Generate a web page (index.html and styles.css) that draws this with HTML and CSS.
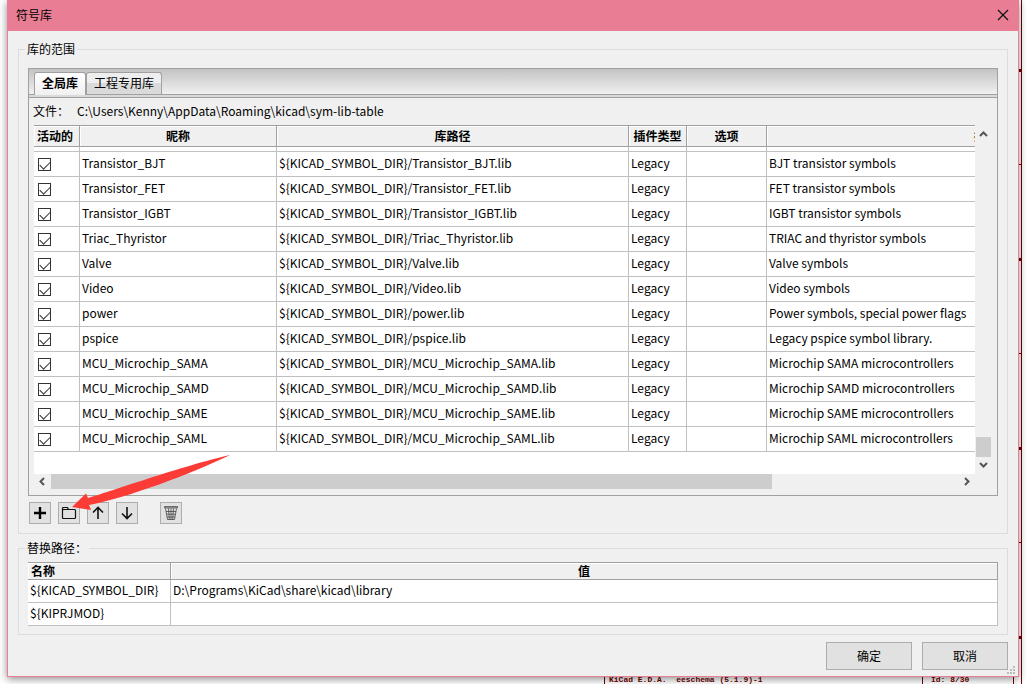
FILE: index.html
```html
<!DOCTYPE html>
<html lang="zh-CN">
<head>
<meta charset="utf-8">
<title>符号库</title>
<link rel="stylesheet" href="styles.css">
</head>
<body>
<div class="sheet" aria-hidden="true">
  <span class="sheet-title">KiCad E.D.A.&nbsp; eeschema (5.1.9)-1</span>
  <span class="sheet-id">Id: 8/30</span>
</div>
<main class="dialog">
  <header class="titlebar">
    <h1 class="title">符号库</h1>
    <button class="close" aria-label="关闭"><svg width="12" height="12" viewBox="0 0 12 12"><path d="M1 1l10 10M11 1L1 11" stroke="#111" stroke-width="1.200" fill="none"/></svg></button>
  </header>
  <div class="content">
    <fieldset class="group scope">
      <legend>库的范围</legend>
      <div class="notebook">
        <div class="tabs" role="tablist">
          <button class="tab selected" role="tab" aria-selected="true">全局库</button>
          <button class="tab" role="tab" aria-selected="false">工程专用库</button>
        </div>
        <div class="page">
          <p class="file"><span class="file-label">文件：</span><span>C:\Users\Kenny\AppData\Roaming\kicad\sym-lib-table</span></p>
          <div class="viewport">
            <div class="rows">
              <table class="grid libs">
                <colgroup><col class="c-active"><col class="c-nick"><col class="c-path"><col class="c-type"><col class="c-opt"><col class="c-desc"></colgroup>
                <thead><tr><th>活动的</th><th>昵称</th><th>库路径</th><th>插件类型</th><th>选项</th><th>描述</th></tr></thead>
                <tbody>
                  <tr class="partial"><td></td><td></td><td></td><td></td><td></td><td></td></tr>
                  <tr><td><input type="checkbox" checked aria-label="Transistor_BJT"></td><td>Transistor_BJT</td><td>${KICAD_SYMBOL_DIR}/Transistor_BJT.lib</td><td>Legacy</td><td></td><td>BJT transistor symbols</td></tr>
                  <tr><td><input type="checkbox" checked aria-label="Transistor_FET"></td><td>Transistor_FET</td><td>${KICAD_SYMBOL_DIR}/Transistor_FET.lib</td><td>Legacy</td><td></td><td>FET transistor symbols</td></tr>
                  <tr><td><input type="checkbox" checked aria-label="Transistor_IGBT"></td><td>Transistor_IGBT</td><td>${KICAD_SYMBOL_DIR}/Transistor_IGBT.lib</td><td>Legacy</td><td></td><td>IGBT transistor symbols</td></tr>
                  <tr><td><input type="checkbox" checked aria-label="Triac_Thyristor"></td><td>Triac_Thyristor</td><td>${KICAD_SYMBOL_DIR}/Triac_Thyristor.lib</td><td>Legacy</td><td></td><td>TRIAC and thyristor symbols</td></tr>
                  <tr><td><input type="checkbox" checked aria-label="Valve"></td><td>Valve</td><td>${KICAD_SYMBOL_DIR}/Valve.lib</td><td>Legacy</td><td></td><td>Valve symbols</td></tr>
                  <tr><td><input type="checkbox" checked aria-label="Video"></td><td>Video</td><td>${KICAD_SYMBOL_DIR}/Video.lib</td><td>Legacy</td><td></td><td>Video symbols</td></tr>
                  <tr><td><input type="checkbox" checked aria-label="power"></td><td>power</td><td>${KICAD_SYMBOL_DIR}/power.lib</td><td>Legacy</td><td></td><td>Power symbols, special power flags</td></tr>
                  <tr><td><input type="checkbox" checked aria-label="pspice"></td><td>pspice</td><td>${KICAD_SYMBOL_DIR}/pspice.lib</td><td>Legacy</td><td></td><td>Legacy pspice symbol library.</td></tr>
                  <tr><td><input type="checkbox" checked aria-label="MCU_Microchip_SAMA"></td><td>MCU_Microchip_SAMA</td><td>${KICAD_SYMBOL_DIR}/MCU_Microchip_SAMA.lib</td><td>Legacy</td><td></td><td>Microchip SAMA microcontrollers</td></tr>
                  <tr><td><input type="checkbox" checked aria-label="MCU_Microchip_SAMD"></td><td>MCU_Microchip_SAMD</td><td>${KICAD_SYMBOL_DIR}/MCU_Microchip_SAMD.lib</td><td>Legacy</td><td></td><td>Microchip SAMD microcontrollers</td></tr>
                  <tr><td><input type="checkbox" checked aria-label="MCU_Microchip_SAME"></td><td>MCU_Microchip_SAME</td><td>${KICAD_SYMBOL_DIR}/MCU_Microchip_SAME.lib</td><td>Legacy</td><td></td><td>Microchip SAME microcontrollers</td></tr>
                  <tr><td><input type="checkbox" checked aria-label="MCU_Microchip_SAML"></td><td>MCU_Microchip_SAML</td><td>${KICAD_SYMBOL_DIR}/MCU_Microchip_SAML.lib</td><td>Legacy</td><td></td><td>Microchip SAML microcontrollers</td></tr>
                </tbody>
              </table>
            </div>
            <div class="vbar">
              <svg width="15" height="17" viewBox="0 0 15 17"><path d="M4 11l3.500-3.500L11 11" fill="none" stroke="#555" stroke-width="2"/></svg>
              <span class="vthumb"></span>
              <svg width="15" height="17" viewBox="0 0 15 17"><path d="M4 6l3.500 3.500L11 6" fill="none" stroke="#555" stroke-width="2"/></svg>
            </div>
            <div class="hbar">
              <svg width="17" height="15" viewBox="0 0 17 15"><path d="M10 4L6.500 7.500 10 11" fill="none" stroke="#555" stroke-width="2"/></svg>
              <span class="htrack"><span class="hthumb"></span></span>
              <svg width="17" height="15" viewBox="0 0 17 15"><path d="M7 4l3.500 3.500L7 11" fill="none" stroke="#555" stroke-width="2"/></svg>
            </div>
          </div>
        </div>
      </div>
      <div class="toolbar">
        <button class="tool" aria-label="添加"><svg width="16" height="16" viewBox="0 0 16 16"><path d="M8 2v12M2 8h12" stroke="#000" stroke-width="2.400" fill="none"/></svg></button>
        <div class="browse">
          <button class="tool" aria-label="浏览"><svg width="16" height="16" viewBox="0 0 16 16"><path d="M1.500 5.500V3.500q0-1 1-1h4l1 2h6q1 0 1 1v7q0 1-1 1h-11q-1 0-1-1zM1.500 5.500q0-1 1-1h5" stroke="#111" stroke-width="1.200" fill="none"/></svg></button>
          <svg class="pointer" width="160" height="56" viewBox="0 0 160 56"><path d="M0 52L14 38.500 16 43C34 38 110 11 158 0C121 18 55 43 17 50L19 55z" fill="#fc3a36"/></svg>
        </div>
        <button class="tool" aria-label="上移"><svg width="16" height="16" viewBox="0 0 16 16"><path d="M8 14V2.500M3 7.500l5-5 5 5" stroke="#111" stroke-width="1.600" fill="none"/></svg></button>
        <button class="tool" aria-label="下移"><svg width="16" height="16" viewBox="0 0 16 16"><path d="M8 2v11.500M3 8.500l5 5 5-5" stroke="#111" stroke-width="1.600" fill="none"/></svg></button>
        <button class="tool trash" aria-label="删除"><svg width="16" height="16" viewBox="0 0 16 16"><path d="M1.500 1.500h13v1.500h-13z" fill="#aaa" stroke="#444" stroke-width=".7"/><path d="M2.500 3.500L4.500 14.500h7l2-11M5.500 3.500l.8 11M8 3.500v11M10.500 3.500l-.8 11M3 6.500h10M3.500 9.200h9M4 12h8" fill="none" stroke="#333" stroke-width=".7"/></svg></button>
      </div>
    </fieldset>
    <fieldset class="group paths">
      <legend>替换路径：</legend>
      <table class="grid subs">
        <colgroup><col class="c-name"><col></colgroup>
        <thead><tr><th>名称</th><th>值</th></tr></thead>
        <tbody>
          <tr><td>${KICAD_SYMBOL_DIR}</td><td>D:\Programs\KiCad\share\kicad\library</td></tr>
          <tr><td>${KIPRJMOD}</td><td></td></tr>
        </tbody>
      </table>
    </fieldset>
    <footer class="actions">
      <button class="push">确定</button>
      <button class="push">取消</button>
    </footer>
  </div>
  <svg class="grip" width="8" height="8" viewBox="0 0 8 8"><path d="M6 0h2v2H6zM3 3h2v2H3zM6 3h2v2H6zM0 6h2v2H0zM3 6h2v2H3zM6 6h2v2H6z" fill="#bbb"/></svg>
</main>
</body>
</html>
```
FILE: styles.css
```css
* { box-sizing: border-box; }
body {
  margin: 0;
  min-height: 100vh;
  overflow: hidden;
  position: relative;
  background: #fff;
  color: #000;
  font: 12px/18px "Noto Sans CJK SC", sans-serif;
}
button { font: inherit; color: inherit; margin: 0; padding: 0; }
svg { display: block; }

/* Schematic sheet behind the dialog */
.sheet {
  position: absolute;
  inset: 0 4px 0 600px;
  border-right: 1px solid #700000;
  background: repeating-linear-gradient(transparent 0 69px, #700000 69px 72px, transparent 72px 164px, #700000 164px 165px, transparent 165px 189px);
  color: #700000;
  font: bold 8px/8px "Liberation Mono", monospace;
}
.sheet-title, .sheet-id {
  position: absolute;
  bottom: 0;
  padding-left: 4px;
  border-left: 1px solid #700000;
  white-space: nowrap;
}
.sheet-title { left: 4px; }
.sheet-id { right: 7px; width: 92px; padding-left: 8px; border-right: 1px solid #700000; }

.dialog {
  position: relative;
  margin: 0 7px;
  border: 1px solid #e67e94;
  border-top: 0;
  background: #f0f0f0;
  box-shadow: 0 2px 8px rgba(0, 0, 0, .45);
}
.titlebar {
  display: flex;
  align-items: center;
  justify-content: space-between;
  height: 31px;
  padding: 0 9px 1px 8px;
  background: #e87d93;
}
.title { margin: 0; font-size: 12px; font-weight: normal; }
.close { padding: 0; border: 0; background: none; }

.content { padding: 9px 10px 6px; }
.group {
  margin: 0;
  min-width: 0;
  padding: 0 9px;
  border: 1px solid #dcdcdc;
}
.group legend {
  margin-left: -3px;
  padding: 0 2px;
}
.scope { padding-bottom: 9px; }
.scope .notebook { margin-top: 10px; }

.notebook { border: 1px solid #a0a0a0; background: #dadada; }
.tabs {
  display: flex;
  align-items: flex-end;
  height: 26px;
  margin-bottom: 2px;
  padding-left: 5px;
  border-bottom: 1px solid #a0a0a0;
  background: linear-gradient(#c3c3c3, #f0f0f0);
}
.tab {
  height: 22px;
  padding: 0 7px 1px;
  border: 1px solid #a0a0a0;
  border-bottom: 0;
  border-radius: 3px 3px 0 0;
  background: linear-gradient(#eee 50%, #dadada 50%);
  line-height: 20px;
}
.tab.selected {
  height: 23px;
  margin-bottom: -1px;
  padding: 0 7px 2px;
  background: linear-gradient(#fff, #f0f0f0);
  font-weight: bold;
}
.page {
  padding: 4px 6px 5px 5px;
  border-top: 1px solid #a0a0a0;
  background: #f0f0f0;
}
.file {
  display: flex;
  gap: 8px;
  margin: 0 0 5px;
}
.file-label { margin-left: -1px; }

.viewport {
  display: grid;
  grid-template-columns: minmax(0, 1fr) 16px;
}
.rows {
  overflow: hidden;
  padding-bottom: 22px;
  background: #fff;
}
.grid {
  table-layout: fixed;
  border-collapse: separate;
  border-spacing: 0;
}
.grid th {
  padding: 0 0 1px;
  border: solid #a0a0a0;
  border-width: 1px 1px 1px 0;
  background: #f0f0f0;
  box-shadow: inset 1px 1px #fff;
  line-height: 16px;
  white-space: nowrap;
}
.grid td {
  padding: 0 2px;
  border: solid #c0c0c0;
  border-width: 0 1px 1px 0;
  background: #fff;
  white-space: nowrap;
}
.libs { width: 1172px; }
.libs th { height: 22px; }
.libs th:first-child { padding-right: 3px; }
.libs td { height: 25px; padding-bottom: 3px; line-height: 16px; }
.libs .partial td { height: 5px; padding: 0; }
.c-active { width: 46px; }
.c-nick { width: 197px; }
.c-path { width: 352px; }
.c-type { width: 58px; }
.c-opt { width: 80px; }
.c-desc { width: 439px; }

.libs td:first-child { padding: 0 4px; }
input[type="checkbox"] {
  appearance: none;
  display: block;
  width: 13px;
  height: 13px;
  margin: 0;
  border: 1px solid #333;
  background: #fff;
}
input[type="checkbox"]:checked::before {
  content: "";
  display: block;
  width: 9px;
  height: 5px;
  margin: 2px 1px;
  border: solid #333;
  border-width: 0 0 1px 1px;
  transform: rotate(-45deg);
}

.vbar {
  display: flex;
  flex-direction: column;
  justify-content: flex-end;
  padding-left: 1px;
}
.vbar svg:first-child { margin-bottom: auto; }
.vthumb { height: 20px; background: #cdcdcd; }
.hbar { display: flex; height: 16px; padding-bottom: 1px; }
.htrack { flex: 1; padding-right: 6px; }
.hthumb { display: block; width: 80%; height: 15px; background: #cdcdcd; }

.toolbar {
  display: flex;
  gap: 7px;
  padding-left: 1px;
  margin-top: 6px;
}
.tool {
  display: grid;
  place-items: center;
  width: 22px;
  height: 22px;
  border: 1px solid #adadad;
  background: #e1e1e1;
}
.trash { margin-left: 15px; }
.browse { position: relative; }
.pointer {
  position: absolute;
  left: 14px;
  bottom: 13px;
  pointer-events: none;
}

.paths { margin-top: 5px; padding-bottom: 8px; }
.subs { width: 100%; margin-top: 5px; }
.subs th { height: 18px; padding-bottom: 0; }
.subs th:first-child { padding-left: 3px; text-align: left; }
.subs td { height: 23px; padding-bottom: 2px; }
.c-name { width: 143px; }

.actions {
  display: flex;
  justify-content: flex-end;
  gap: 10px;
  margin-top: 7px;
}
.push {
  width: 86px;
  height: 28px;
  padding-bottom: 1px;
  border: 1px solid #adadad;
  background: #e1e1e1;
}
.grip { position: absolute; right: 3px; bottom: 2px; }
```
